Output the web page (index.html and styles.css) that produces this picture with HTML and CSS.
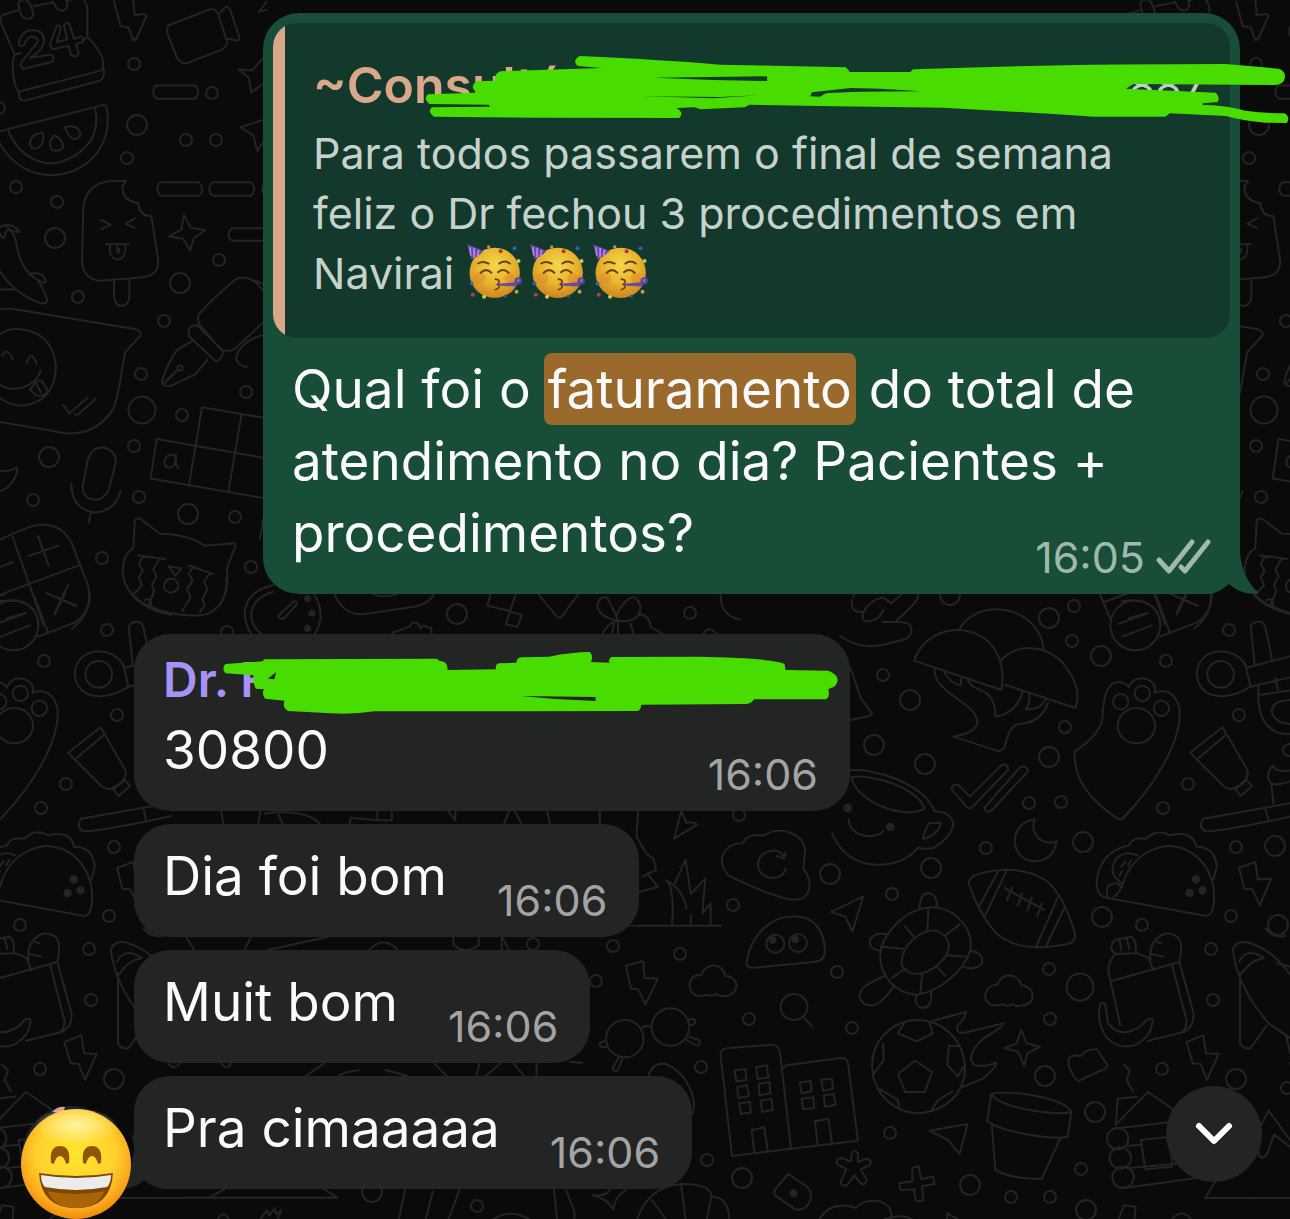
FILE: index.html
```html
<!DOCTYPE html>
<html lang="pt-BR">
<head>
  <meta charset="UTF-8" />
  <meta name="viewport" content="width=device-width, initial-scale=1.0" />
  <title>Conversa</title>
  <link rel="stylesheet" href="styles.css">
</head>
<body>
  <main class="chat">

    <!-- wallpaper, repeats every 1122px -->
    <svg class="wallpaper" width="1290" height="1219" viewBox="0 0 1290 1219" aria-hidden="true">
      <defs>
        <path id="dots-s" d="M134 64h0M212 93h0M186 140h0M216 140h0M127 158h0M16 187h0M57 202h0M219 260h0M78 297h0M164 321h0M141 374h0M246 392h0M182 415h0M134 446h0M33 500h0M139 497h0M235 517h0M102 558h0M251 567h0M-1 108h0M1074 606h0M1072 641h0M883 675h0M1166 661h0M1229 630h0M1065 727h0M1239 715h0M1188 784h0M1163 808h0M1029 803h0M1061 802h0M986 848h0M1236 847h0M892 894h0M1231 916h0M1289 750h0M739 815h0M733 905h0M613 946h0M680 954h0M596 981h0M837 972h0M749 1019h0M852 1028h0M701 1067h0M1049 969h0M1050 1019h0M1142 925h0M1211 949h0M1213 1000h0M1162 1069h0M890 1133h0M707 1160h0M1011 1197h0M1050 1197h0M1081 1169h0M1287 1088h0M690 613h0M227 632h0M533 944h0M477 1206h0"/>
        <path id="dots-m" d="M137 125h0M55 238h0M180 283h0M49 457h0M188 514h0M1049 618h0M1101 656h0M910 700h0M874 745h0M925 764h0M1049 757h0M1083 842h0M931 868h0M1275 846h0M1102 917h0M1278 925h0M950 595h0M830 874h0M1045 1076h0M1095 1112h0M1236 1079h0M742 1178h0M970 1185h0M1086 1210h0M457 614h0M372 1192h0"/>
        <path id="dots-l" d="M142 410h0M1080 987h0"/>

        <g id="doodles">
          <use href="#dots-s" class="dot dot-s"/><use href="#dots-s" class="dot dot-s-in"/>
          <use href="#dots-m" class="dot dot-m"/><use href="#dots-m" class="dot dot-m-in"/>
          <use href="#dots-l" class="dot dot-l"/><use href="#dots-l" class="dot dot-l-in"/>

          <!-- top left: calendar, bolt, camera, melon, ice cream, pen, mic, cat -->
          <svg x="0" y="0" width="270" height="620" viewBox="0 0 810 1568" preserveAspectRatio="none" overflow="visible">
            <path d="M54 26L8 38Q-2 44 4 60L44 138Q34 160 40 190Q44 220 56 232L305 178Q314 166 306 144Q286 110 262 94L262 20Q258 0 240 -8L202 2M100 16L158 6M44 138L62 134M250 102L262 94M56 232L58 246Q62 254 76 254L300 204Q314 198 312 176"/>
            <path d="M54 10Q56 0 72 -2Q86 0 92 14L100 34Q98 48 82 48Q68 46 62 34ZM158 4L166 16Q176 30 192 26Q206 20 200 6L194 -12"/>
            <path d="M56 110Q64 76 100 76Q134 78 132 106Q126 130 90 146L154 138Q166 148 156 156L72 174Q60 172 64 158Q100 120 114 106Q112 92 94 92Q78 98 72 114Q60 122 56 110ZM170 66Q180 60 182 74L170 106 202 100 192 66Q196 56 208 60L222 98 244 92Q254 96 248 106L228 112 236 134Q234 144 222 142L212 138 206 116 160 124Q148 118 152 106Z"/>
            <path d="M342 4L362 66 386 70 400 102Q408 102 412 92L440 40Q436 34 426 36L404 38 400 0"/>
            <path d="M506 64L628 24Q644 20 654 34L682 108Q680 120 664 126L560 160Q540 160 530 144L502 84Q500 70 506 64ZM656 36L676 18Q686 16 692 28L718 94Q718 104 706 102L682 98"/>
            <path d="M470 216H584Q596 224 594 238Q590 250 580 250H472Q460 244 460 234Q460 220 470 216ZM482 461H596Q608 469 606 483Q602 495 592 495H484Q472 489 472 479Q472 465 482 461ZM638 461H752Q764 469 762 483Q758 495 748 495H640Q628 489 628 479Q628 465 638 461ZM800 577H698Q686 583 686 593Q686 605 698 609H800M808 461Q786 465 786 479Q788 491 808 495"/>
            <path d="M-10 334L316 264Q326 280 322 320C306 430 160 470 70 424Q26 404 -6 356M24 328C50 390 130 436 210 400Q304 360 286 276"/>
            <path d="M90 360Q94 338 128 336Q134 350 124 366Q110 380 96 374Q88 368 90 360ZM162 342Q186 350 190 372Q182 384 158 380Q148 374 150 358ZM194 322Q230 312 242 336Q238 352 222 352Q208 350 194 322Z"/>
            <path d="M378 458H330Q254 466 250 530L246 660Q248 706 300 710L420 702Q480 698 474 656L454 546Q420 548 414 514Q364 506 368 470ZM342 710V750Q346 774 366 774Q388 770 388 750V708M302 556L332 568 304 580M404 552L376 566 404 576M318 618H388M330 622V640Q340 658 356 656Q378 652 376 622M352 624V638Q358 642 358 630"/>
            <path d="M552 544L572 576 616 582 582 602 570 634 550 604 508 598 544 580ZM716 176L756 178 790 146M716 176L746 196 754 234 800 205M722 322L800 300M722 322L760 342 772 382 800 345M800 5L776 30 800 25"/>
            <path d="M0 574Q34 560 58 586Q40 590 16 570M0 590Q10 610 14 596Q18 580 26 582Q44 586 50 620Q60 680 114 710Q136 736 142 762Q136 770 118 766Q40 740 0 686M88 694Q130 684 138 712Q130 718 112 708M-10 732H48"/>
            <path d="M-30 790Q10 776 44 782L404 832Q424 836 422 848L376 890C360 960 356 1000 340 1034Q290 1100 200 1096L-10 1066M-20 860Q10 830 56 832Q160 840 168 928Q164 1020 60 1026Q10 1022 -20 990M6 900Q20 876 38 908M80 918Q94 882 110 920M-10 966C30 1000 110 980 122 936M90 986Q110 958 124 962L144 988Q130 1006 110 1000ZM110 972L122 992M190 1024L208 1046 262 1006M224 1048H234L286 1010"/>
            <path d="M596 796Q630 760 708 706Q730 696 760 710Q790 730 810 760M596 796Q590 808 600 822L660 882Q680 892 702 884L810 800M764 710L800 720M566 834Q570 824 590 822L668 886Q670 908 648 914L566 850ZM576 862L530 886Q490 940 486 968Q490 978 512 976L586 946 622 910M492 970L534 934M800 845Q720 860 708 906Q714 926 740 928"/>
            <ellipse cx="540" cy="931" rx="8" ry="6"/>
            <path d="M606 1030L830 1062M470 1110L830 1164M452 1210L820 1264M606 1030L568 1222M724 1050L686 1240M470 1110L452 1210M526 1156Q520 1146 506 1152Q490 1160 494 1174Q500 1186 516 1182Q530 1170 528 1150Q524 1180 536 1184"/>
            <path d="M264 1160Q280 1128 310 1132Q346 1138 348 1168L326 1240Q310 1266 280 1264Q246 1258 248 1230ZM214 1222Q214 1286 280 1296Q344 1296 362 1242M272 1298L266 1322M0 1190Q30 1194 50 1182Q56 1200 30 1226Q20 1236 0 1242"/>
            <path d="M0 1364L90 1332Q180 1312 216 1376L264 1480Q280 1550 216 1590M38 1358L130 1580M0 1504L236 1430M86 1406L174 1380M114 1356L146 1430M140 1500L226 1532M204 1480L164 1550M0 1434L38 1422M0 1520Q110 1510 116 1580M20 1564L76 1550"/>
            <path d="M400 1386L404 1316Q414 1304 430 1318L480 1350Q560 1350 614 1380L704 1374Q710 1380 700 1394L680 1440C690 1500 660 1552 600 1556C500 1560 380 1530 368 1450Q368 1400 400 1386ZM414 1404L496 1414M430 1406L416 1426 428 1444 416 1460 426 1480 402 1502M478 1414L460 1440 470 1458 456 1478 462 1496 446 1530M566 1430L640 1452M582 1432L566 1450 578 1470 560 1490 572 1510 546 1546M630 1450L612 1470 622 1490 606 1516 614 1530 600 1548M506 1432L544 1438 526 1456ZM492 1480Q500 1460 520 1464Q540 1474 534 1488Q520 1504 500 1496Q490 1490 492 1480ZM780 1362L790 1310"/>
          </svg>

          <!-- strip between the two senders: stopwatch, kite, hearts -->
          <svg x="220" y="585" width="520" height="60" viewBox="0 0 1560 180" overflow="visible">
            <path d="M160 0Q74 20 74 90Q78 130 104 160M160 20Q90 40 94 100Q100 130 124 146M270 10Q304 50 302 100Q296 130 284 146M220 50Q232 46 230 58L194 98Q180 106 174 94ZM344 28Q370 90 430 88L590 64Q628 54 642 28M460 28Q490 40 530 28M516 144L570 124Q576 106 594 116L602 130Q608 116 620 126L634 128V146M812 26L802 62 870 78 888 26M870 78L858 118 892 126 906 90 872 80M956 28L1010 94Q1018 102 1026 94L1074 28M1188 92Q1220 30 1246 38Q1270 60 1256 90Q1230 116 1190 106Q1136 96 1132 62Q1134 36 1160 36Q1180 70 1196 110M1256 86Q1290 90 1292 126L1326 146M1188 106Q1160 120 1148 146M1184 108L1176 146M1194 108V146M1232 116L1240 146M1502 28Q1500 90 1560 104M1450 146Q1466 120 1488 146M0 60Q24 20 18 -20"/>
            <path class="solid" d="M262 32a8 8 0 1 0 1 0M275 77a8 8 0 1 0 1 0M262 122a8 8 0 1 0 1 0"/>
          </svg>

          <!-- right middle: mushrooms, paw, cup, ticks, moon, toothpaste -->
          <svg x="840" y="590" width="450" height="330" viewBox="0 0 1350 990" overflow="visible">
            <path d="M0 138Q60 180 130 164L200 146Q220 130 212 108Q204 94 160 96L128 96M168 94L220 44Q236 26 236 0M36 30Q30 70 70 66M40 20L50 0M70 70Q60 100 96 92Q120 84 130 60M70 66Q90 30 130 22L154 40 200 0"/>
            <path d="M222 212C260 110 380 96 444 154Q500 210 484 300ZM358 118C400 36 560 30 606 150L610 176M484 210C540 150 640 170 684 240Q726 300 706 354L494 284M284 238Q280 270 320 302C380 350 410 360 412 400Q404 430 340 440L470 482Q486 486 494 470Q510 400 540 402Q606 396 624 338M314 248Q330 280 362 286L364 264M384 272Q390 290 430 304Q466 320 466 380Q530 370 548 306M568 312Q570 340 558 358Q600 360 616 330M30 230L62 324 96 370Q96 378 80 380L30 390"/>
            <path d="M704 484Q790 430 788 370Q794 270 840 276Q860 280 866 292Q880 260 916 266Q950 276 944 308Q1000 290 1018 352C1030 460 930 600 850 684Q840 692 830 684C750 630 700 570 704 484Z"/>
            <circle cx="842" cy="335" r="23"/><circle cx="907" cy="310" r="23"/><circle cx="964" cy="355" r="23"/><ellipse cx="889" cy="407" rx="56" ry="53"/>
            <path d="M20 542C100 530 250 580 284 664Q330 664 340 700Q336 740 280 774Q250 780 234 772C190 830 90 840 30 800Q0 780 -24 730M34 562C90 550 230 590 254 656C200 690 50 640 34 562ZM266 700L302 698Q300 730 250 748Q246 740 266 700ZM26 688C30 740 100 752 130 724"/>
            <circle class="solid" cx="23" cy="654" r="10"/><circle class="solid" cx="151" cy="711" r="10"/>
            <path d="M334 598Q340 578 356 586L390 620 486 524Q506 522 504 540L396 652Q388 658 380 650ZM434 652L540 532Q560 524 564 544L456 660Q438 674 434 652ZM584 688C500 700 510 814 584 814Q640 812 650 754Q630 764 606 752Q570 730 584 688Z"/>
            <path d="M780 12L812 90M792 36L860 12M946 12L990 128M1116 12Q1114 70 1070 98L960 140M1010 74L1040 12M1020 24L1074 46M834 102L922 70M848 140L936 106"/>
            <circle cx="886" cy="106" r="75"/>
            <path d="M1220 234C1190 160 1070 170 1070 254C1080 330 1160 334 1232 290L1218 234L1360 196M1232 290L1360 260M1244 224L1232 110Q1240 92 1264 96Q1276 104 1278 120L1296 208M1256 282Q1250 350 1270 390Q1300 440 1360 430M1262 314L1360 300M1306 264L1314 300M1360 330Q1290 330 1296 370Q1310 404 1360 402M1050 488L1148 412 1222 540Q1228 556 1210 580L1174 598Q1160 596 1150 588ZM1076 504L1158 434M1186 598L1218 568 1236 588 1202 618ZM1090 686L1360 638M1090 686Q1074 706 1092 722Q1110 732 1360 678M1276 656L1284 688M1300 640L1294 580Q1272 560 1298 526Q1306 550 1360 540M1296 580Q1310 590 1360 570M1240 12Q1280 60 1360 74M1280 30Q1300 20 1300 50"/>
            <circle cx="1142" cy="253" r="40"/>
          </svg>

          <!-- bottom right: cloud, turtle, football, taco, buildings, ball, pot, cabin -->
          <svg x="590" y="800" width="700" height="419" viewBox="0 0 1568 1257" preserveAspectRatio="none" overflow="visible">
            <path d="M22 30V60M108 30L104 110 128 164 142 176 148 210 118 230M128 220L152 260 110 276M170 240Q190 260 184 376M170 240Q210 270 216 326M190 250L214 180 226 282 258 236 252 340 270 310V376M226 346V376M90 377H294M204 36L188 116 240 74Q234 64 216 68L206 36"/>
            <path d="M310 226C280 180 300 130 342 130Q350 100 390 106C420 80 476 92 482 150L478 206C500 240 500 310 446 298Q390 280 310 226ZM438 206C430 250 376 240 376 192C380 144 430 140 434 174M418 168L434 176 438 158"/>
            <path d="M350 490C360 400 410 340 470 350C520 360 530 430 524 470Q516 486 500 486L362 504Q350 500 350 490Z"/>
            <ellipse cx="415" cy="431" rx="20" ry="27"/><ellipse cx="466" cy="429" rx="20" ry="27"/>
            <ellipse class="solid" cx="409" cy="420" rx="6" ry="9"/><ellipse class="solid" cx="460" cy="418" rx="6" ry="9"/>
            <path d="M540 336L612 290 588 394 572 350ZM80 498L116 484Q122 484 120 496L122 534 152 536 124 614 108 568 92 566ZM1454 204L1490 186 1496 238 1526 236 1500 316 1484 268 1466 266ZM1336 726L1374 706 1380 760 1408 762 1382 840 1368 792 1350 790ZM234 584C216 570 220 522 250 524C260 484 300 490 302 528C340 530 334 590 300 588Q290 590 284 582Q270 592 262 584Q244 592 234 584ZM898 614C876 600 884 554 912 554C924 514 960 520 966 556C1000 560 1000 616 966 616Q954 622 948 612Q934 622 926 612Q908 620 898 614Z"/>
            <path d="M650 470C650 410 700 330 760 322C820 320 860 390 852 450C840 510 780 580 730 584C680 580 650 520 650 470ZM698 490C696 440 740 386 776 392C810 410 810 450 790 480C770 510 740 530 716 518Q700 510 698 490ZM758 326L756 388M706 378L726 412M828 374L796 406M652 440L702 446M846 470L800 466M676 534L708 504M740 582L744 520M796 528L776 500M738 324Q740 278 758 280Q780 284 776 322M668 404Q630 392 626 430Q630 450 650 452M852 454Q882 456 878 490Q866 512 838 502M660 528Q600 560 604 590Q610 622 640 614Q660 600 682 556M734 584Q720 616 746 624Q768 620 764 576M848 250Q850 230 870 222Q960 190 1020 240Q1060 280 1086 400Q1090 430 1060 434Q960 460 910 400Q870 340 848 250ZM914 214L872 318M934 210L884 350M1048 292L1000 438M1064 320L1022 438M928 264L1018 330M946 262L934 300M968 280L958 316M990 292L980 330M1012 310L1002 348"/>
            <path d="M1160 294C1130 290 1130 240 1144 200Q1160 150 1208 136Q1214 110 1246 116Q1270 84 1300 106Q1350 90 1358 140Q1400 140 1404 200L1396 240M1160 294L1380 348Q1396 346 1398 300C1400 200 1350 136 1290 138C1230 150 1200 210 1192 260M1160 294Q1150 250 1180 250Q1200 260 1174 290M1192 250Q1156 220 1180 174Q1200 150 1226 166M1200 184L1190 200M1212 180L1206 196M1192 214L1186 226"/>
            <ellipse class="solid" cx="1357" cy="238" rx="7" ry="10"/><ellipse class="solid" cx="1343" cy="279" rx="7" ry="10"/><ellipse class="solid" cx="1372" cy="271" rx="7" ry="10"/>
            <ellipse cx="78" cy="716" rx="42" ry="56"/><ellipse cx="180" cy="681" rx="42" ry="56"/>
            <path d="M114 686Q124 672 138 682M66 768L50 806Q56 822 64 806L74 772M36 724Q20 724 22 738Q30 746 40 740M220 660Q234 652 236 664Q234 676 222 676M214 718L240 738Q250 730 244 720L222 710M478 652L498 680M132 826Q140 786 170 792C220 820 240 900 230 940"/>
            <ellipse cx="457" cy="621" rx="30" ry="39"/>
            <path d="M292 760Q296 744 310 744L410 734Q424 740 426 760L450 1042M318 1068L292 760M318 1068L600 1022L578 790Q576 772 560 774L440 796 430 806M324 812L348 806 350 840 328 844ZM372 802L396 796 400 832 376 838ZM330 862L352 856 356 888 332 894ZM378 852L402 846 404 880 380 886ZM334 910L358 906 360 938 338 942ZM382 902L406 896 410 930 386 936ZM470 848L494 842 496 874 474 880ZM518 840L542 836 544 866 522 872ZM474 896L500 892 502 924 478 928ZM524 886L546 882 550 914 526 920ZM368 1056L362 990 390 982 398 1050M510 1034L504 964 534 956 542 1028"/>
            <path d="M734 660C680 660 630 720 632 800C634 880 680 940 740 940C800 930 840 880 840 800C836 720 790 660 734 660ZM704 668L690 700 732 724 768 700 760 666M728 782L766 816 750 876 706 876 690 822ZM656 730L658 780 636 820M804 738H826M804 738L800 794 824 830 836 800M650 868L690 900 692 926M766 928L778 902 812 874M768 662L842 636Q844 646 824 676Q816 702 840 698L926 670Q928 678 880 716Q840 770 860 794Q880 804 910 788Q912 800 880 836L836 860"/>
            <path d="M966 690L978 730 1008 740 980 760 972 798 960 756 928 744 956 730ZM1072 776Q1080 762 1100 768Q1110 746 1136 748L1158 794Q1160 808 1140 814L1096 842Q1086 844 1072 796ZM1196 794L1210 812 1202 840 1216 874"/>
            <path d="M900 882C940 870 1060 890 1078 936C1040 950 910 920 900 882ZM898 886L890 964C930 1000 1040 1020 1070 1010L1078 936M900 974L908 1110Q950 1140 1012 1136L1054 1014M760 992L846 972 828 1062 802 1020ZM584 1084L586 1060Q594 1046 600 1060L600 1086 620 1076Q634 1080 626 1096L606 1108 620 1140Q616 1158 606 1150L592 1126 576 1156Q562 1160 562 1144L574 1108 554 1092Q550 1074 562 1074ZM722 1104L736 1098 742 1138 768 1130 772 1152 744 1158 746 1202 730 1202 726 1168 696 1170 692 1150 722 1144ZM444 1122L486 1160Q500 1180 492 1206Q480 1234 460 1228L414 1186Q410 1174 420 1160Z"/>
            <ellipse class="solid" cx="456" cy="1180" rx="6" ry="9"/>
            <path d="M1168 448Q1166 418 1190 416L1212 410Q1226 420 1222 460L1176 462ZM1186 418L1190 450M1202 414L1208 446M1176 464Q1158 490 1162 520L1188 676M1222 458L1250 472 1262 510M1170 542L1320 486Q1330 430 1316 410C1280 380 1250 430 1256 480M1280 430L1270 426M1284 470L1258 462M1320 486L1352 640Q1354 680 1330 696L1250 722M1304 496L1336 660Q1338 690 1320 700M1144 610Q1132 660 1156 710Q1180 750 1220 736Q1260 710 1260 658Q1250 650 1236 676Q1190 720 1160 670L1154 610Z"/>
            <path d="M1440 450Q1444 424 1470 426C1540 450 1580 540 1600 600M1440 450Q1450 560 1520 670L1570 716M1456 520V730Q1464 750 1480 744L1516 676M1454 484Q1470 440 1510 474Q1480 480 1460 520M1540 490L1570 500M1560 710L1568 760"/>
            <path d="M1178 974L1250 876 1330 950M1186 984L1300 966M1178 974L1182 896 1226 890M1202 1038L1236 1034M1206 1104L1360 1086M1196 1164L1360 1134M1234 1020L1300 1010 1304 1100 1244 1108ZM1400 1146L1378 1194H1600M1520 932L1568 1020M1520 932L1490 1010 1500 1070Q1512 1080 1520 1050L1532 1004 1568 1040"/>
            <ellipse cx="1182" cy="1016" rx="24" ry="32"/><ellipse cx="1188" cy="1074" rx="24" ry="32"/><ellipse cx="1194" cy="1132" rx="24" ry="32"/>
            <path d="M6 1186Q40 1190 44 1168M6 1186Q40 1196 52 1228Q56 1190 80 1170M106 1257Q130 1160 204 1152Q270 1150 272 1190Q310 1190 312 1257M138 1200L170 1257M204 1154L214 1257M272 1190L262 1257M514 1257Q540 1200 596 1224Q610 1196 650 1204Q680 1220 674 1257M660 1257Q700 1240 720 1257M800 1257V1240L824 1257M1184 1257L1196 1216 1222 1220 1220 1257M1304 1257Q1326 1224 1346 1257"/>
          </svg>

          <!-- gaps between the received bubbles -->
          <svg x="130" y="795" width="620" height="424" viewBox="0 0 1568 1272" preserveAspectRatio="none" overflow="visible">
            <path d="M230 45L236 86M330 45L324 86M376 60L386 86M340 56Q440 40 480 86M556 86L558 68 626 76V45M626 76H662V45M802 45L822 76 824 45M960 45L946 86M972 45L990 86M1054 45L1062 86M1188 45V86M34 400Q50 430 84 422M142 426L162 464M306 426L290 464M350 464L500 426M606 464Q640 420 676 464M818 426V450Q850 480 882 450V426M940 426V464M942 426L958 464M446 842L490 806M530 840Q550 830 578 826M646 824L700 842M770 806L800 842M884 806L876 842M900 842L936 806M970 806L996 842M1028 806V842M1112 800L1144 804M96 804Q110 830 126 804M230 804Q244 830 256 804M0 1208H524L490 1182M200 1208L240 1182M696 1182L680 1272M766 1190L748 1272M834 1182L806 1272M1072 1182L1080 1272M1102 1182L1124 1250V1272M920 1272Q960 1240 1010 1272M330 1272L346 1246 352 1262 366 1240 370 1258 382 1246 374 1272M222 1272Q236 1244 250 1272"/>
          </svg>
        </g>
      </defs>
      <use href="#doodles"/>
      <use href="#doodles" x="1122"/>
      <use href="#doodles" x="-1122"/>
    </svg>

    <svg width="0" height="0" class="sprite" aria-hidden="true">
      <defs>
        <radialGradient id="skin" cx=".5" cy=".35" r=".65">
          <stop offset="0" stop-color="#f4d84a"/>
          <stop offset=".55" stop-color="#e8b62e"/>
          <stop offset="1" stop-color="#cf851f"/>
        </radialGradient>
        <symbol id="party" viewBox="52 22 189 169">
          <circle cx="138" cy="112" r="76" fill="url(#skin)"/>
          <circle cx="92" cy="128" r="18" fill="#e0882a" opacity=".5"/>
          <circle cx="184" cy="128" r="16" fill="#e0882a" opacity=".5"/>
          <path d="M55 26L104 46Q90 62 68 72Z" fill="#6d45b4"/>
          <path d="M63 34L66 60M76 36L76 66M90 42L86 62" stroke="#b98ae0" stroke-width="5" fill="none"/>
          <path d="M88 84Q102 74 120 84M152 84Q168 72 184 84M96 112Q112 96 128 112M148 110Q164 96 180 112" stroke="#6b4218" stroke-width="6" fill="none" stroke-linecap="round"/>
          <path d="M140 131Q160 134 146 147Q160 156 140 163" stroke="#6b3d14" stroke-width="5" fill="none" stroke-linecap="round"/>
          <path d="M150 145L204 140V153L150 151Z" fill="#6a4a9e"/>
          <circle cx="209" cy="136" r="11" fill="#5a4596"/>
          <circle cx="209" cy="135" r="4" fill="#8d79c4"/>
          <circle cx="156" cy="47" r="6" fill="#b8322f"/>
          <circle cx="120" cy="34" r="5" fill="#c98a5a"/>
          <circle cx="198" cy="38" r="6" fill="#2f62b0"/>
          <circle cx="210" cy="76" r="6" fill="#c9c944"/>
          <circle cx="68" cy="144" r="6" fill="#2f62b0"/>
          <circle cx="72" cy="178" r="6" fill="#a8405a"/>
          <circle cx="106" cy="184" r="6" fill="#c9d444"/>
          <circle cx="170" cy="183" r="5" fill="#2f5a8a"/>
          <circle cx="204" cy="169" r="6" fill="#c99a4a"/>
        </symbol>
      </defs>
    </svg>

    <article class="bubble bubble-out">
      <blockquote class="quote">
        <div class="quote-head">
          <span class="quote-name">~Consultór</span>
          <span class="quote-phone">887</span>
        </div>
        <p class="quote-text">Para todos passarem o final de semana feliz o Dr fechou 3 procedimentos em Navirai <svg class="emoji" role="img" aria-label="🥳"><use href="#party"/></svg><svg class="emoji" role="img" aria-label="🥳"><use href="#party"/></svg><svg class="emoji" role="img" aria-label="🥳"><use href="#party"/></svg></p>
      </blockquote>
      <p class="text">Qual foi o <mark>faturamento</mark> do total de atendimento no dia? Pacientes + procedimentos?
        <span class="meta">
          <time>16:05</time>
          <svg class="ticks" width="54" height="36" viewBox="0 0 54 36" role="img" aria-label="Entregue"><path d="M3 21L13 32L36 3M25 28L29 32L52 3"/></svg>
        </span>
      </p>
      <svg class="tail-out" width="50" height="50" viewBox="0 0 50 50" aria-hidden="true"><path d="M0 0H30V10Q33 36 49 49Q32 52 19 40Q10 48 0 50Z"/></svg>
      <svg class="scribble-out" width="1030" height="350" viewBox="0 0 1568 1050" preserveAspectRatio="none" aria-hidden="true"><path d="M487 168Q620 180 700 194L892 202 898 216 990 216 994 208Q1200 192 1470 192L1550 206Q1562 212 1560 235Q1558 255 1545 255L1330 252 1318 266 1455 278Q1462 290 1458 306L1435 310V315Q1470 315 1500 332Q1530 340 1560 340Q1569 352 1563 369L1530 368Q1495 362 1470 348L1385 340 1378 350H1270Q1150 335 1040 323L850 318 745 314 738 322 670 328 662 322 634 324Q647 340 638 354L420 353 265 350Q254 335 262 322L350 320 348 314 258 312Q248 295 256 283L330 278Q318 260 330 244L358 242Q356 222 366 214L520 204 484 198Q474 182 487 168ZM600 233L772 229V243L690 240ZM840 277L900 264 945 266 1006 274Q900 274 862 280L852 290 838 289ZM580 289L700 291 760 286 690 295 640 292Z"/></svg>
    </article>

    <article class="bubble bubble-in bubble-named">
      <div class="sender"><span>Dr. F</span><span>m</span></div>
      <div class="line">
        <p class="text">30800</p>
        <time>16:06</time>
      </div>
      <svg class="scribble-in" width="730" height="190" viewBox="0 0 1568 570" preserveAspectRatio="none" aria-hidden="true"><path d="M205 102L285 94 288 88 660 86 664 92Q684 94 682 120L786 118Q784 104 792 100L830 98Q830 84 840 82L900 80Q950 66 988 66Q996 80 990 96L1030 98Q1026 88 1034 81L1220 80Q1380 84 1406 102L1408 120 1500 122Q1520 132 1520 152Q1518 170 1505 174L1500 178Q1504 200 1495 208H1340Q1338 218 1325 222L1098 224Q1098 240 1090 243L525 244Q480 254 430 250L340 243Q326 232 332 212L290 206Q282 190 288 178L270 176Q264 160 265 136L205 130Q196 115 205 102ZM296 146L314 126 310 148ZM840 198L1000 201V213Q920 210 840 198Z"/></svg>
    </article>

    <article class="bubble bubble-in">
      <div class="line">
        <p class="text">Dia foi bom</p>
        <time>16:06</time>
      </div>
    </article>

    <article class="bubble bubble-in">
      <div class="line">
        <p class="text">Muit bom</p>
        <time>16:06</time>
      </div>
    </article>

    <div class="row">
      <svg class="avatar" width="110" height="114" viewBox="0 0 110 114" role="img" aria-label="😄">
        <defs>
          <radialGradient id="face" cx=".5" cy=".4" r=".6">
            <stop offset="0" stop-color="#ffe52e"/>
            <stop offset=".6" stop-color="#ffd02c"/>
            <stop offset=".85" stop-color="#fba81c"/>
            <stop offset="1" stop-color="#ef8a0c"/>
          </radialGradient>
          <radialGradient id="shine" cx=".5" cy=".4" r=".5">
            <stop offset="0" stop-color="#fff8b0" stop-opacity=".9"/>
            <stop offset="1" stop-color="#fff8b0" stop-opacity="0"/>
          </radialGradient>
        </defs>
        <circle cx="50" cy="50" r="49" fill="#1d2430"/>
        <path d="M31 7Q37 1 44 2L42 8Z" fill="#d9a3a0"/>
        <circle cx="55" cy="59" r="55" fill="url(#face)"/>
        <ellipse cx="55" cy="24" rx="42" ry="20" fill="url(#shine)"/>
        <path d="M30 58Q28 41 39 41Q50 41 48 58L45 59Q43 51 39 51Q35 51 33 59ZM62 58Q60 41 71 41Q82 41 80 58L77 59Q75 51 71 51Q67 51 65 59Z" fill="#8f5605"/>
        <path d="M18 68Q55 74 92 68Q90 103 55 103Q20 103 18 68Z" fill="#7c4704"/>
        <path d="M26 86Q55 92 84 86Q76 103 55 103Q34 103 26 86Z" fill="#a86405"/>
        <path d="M20 70Q55 76 90 70Q90 78 86 82Q55 88 24 82Q20 78 20 70Z" fill="#ececec"/>
      </svg>
      <article class="bubble bubble-in bubble-last">
        <div class="line">
          <p class="text">Pra cimaaaaa</p>
          <time>16:06</time>
        </div>
        <svg class="tail-in" width="50" height="50" viewBox="0 0 50 50" aria-hidden="true"><path d="M50 0H19V10Q17 36 1 49Q18 52 29 41Q38 49 50 50Z"/></svg>
      </article>
    </div>

    <button class="to-bottom" type="button" aria-label="Ir para o fim">
      <svg width="40" height="26" viewBox="0 0 40 26" aria-hidden="true"><path d="M5 5L20 20L35 5"/></svg>
    </button>
  </main>
</body>
</html>
```
FILE: styles.css
```css
* {
  box-sizing: border-box;
}
body {
  margin: 0;
  background: #0a0a0a;
  color: #fafafa;
  font-family: 'Inter', sans-serif;
}
p, blockquote {
  margin: 0;
}
.chat {
  position: relative;
  display: flex;
  flex-direction: column;
  align-items: flex-start;
  gap: 13px;
  min-height: 100vh;
  padding-top: 13px;
  overflow: hidden;
}

/* wallpaper */
.wallpaper {
  position: absolute;
  top: 0;
  left: 0;
  fill: none;
  stroke: #242424;
  stroke-width: 2px;
  stroke-linecap: round;
  stroke-linejoin: round;
}
.wallpaper path,
.wallpaper ellipse,
.wallpaper circle {
  vector-effect: non-scaling-stroke;
}
.wallpaper .solid {
  fill: #242424;
}
.dot-s { stroke-width: 14px; }
.dot-s-in { stroke-width: 10px; stroke: #0a0a0a; }
.dot-m { stroke-width: 22px; }
.dot-m-in { stroke-width: 18px; stroke: #0a0a0a; }
.dot-l { stroke-width: 29px; }
.dot-l-in { stroke-width: 25px; stroke: #0a0a0a; }
.sprite {
  position: absolute;
}

/* bubbles */
.bubble {
  position: relative;
  border-radius: 36px;
}
.bubble-out {
  align-self: stretch;
  margin: 0 50px 27px 263px;
  padding: 10px 10px 13px;
  border-bottom-right-radius: 0;
  background: linear-gradient(#184d37, #184d37) no-repeat 0 0 / 100% calc(100% - 50px), linear-gradient(#184d37, #184d37) no-repeat 0 100% / calc(100% - 30px) 50px;
}
.bubble-in {
  margin-left: 134px;
  padding: 16px 32px 25px 29px;
  background: #232524;
}
.text {
  font-size: 53px;
  line-height: 72px;
}
.bubble-out .text {
  padding: 15px 20px 0 19px;
}
time {
  font-size: 43px;
  line-height: 48px;
  color: #a3a4a4;
}
mark {
  margin: 0 -2px;
  padding: 4px;
  border-radius: 8px;
  background: #996a2b;
  color: inherit;
}

/* quoted message */
.quote {
  padding: 32px 24px 35px 40px;
  border-radius: 24px;
  background: linear-gradient(90deg, #dba78a 12px, #12392b 12px);
}
.quote-head {
  display: flex;
  justify-content: space-between;
  margin-bottom: 8px;
  line-height: 60px;
}
.quote-name {
  font-size: 50px;
  font-weight: 600;
  color: #dba78a;
}
.quote-phone {
  font-size: 43px;
  color: #c4cfca;
}
.quote-text {
  font-size: 43px;
  line-height: 60px;
  color: #c8d2cd;
}
.emoji {
  width: 63px;
  height: 56px;
  vertical-align: -10px;
}

.meta {
  float: right;
  display: flex;
  align-items: center;
  gap: 11px;
  margin-top: 36px;
}
.meta time {
  color: #a0b9ac;
}
.ticks {
  overflow: visible;
  fill: none;
  stroke: #a0b9ac;
  stroke-width: 5px;
  stroke-linecap: round;
  stroke-linejoin: round;
}
.line {
  display: flex;
  align-items: flex-end;
  justify-content: space-between;
  gap: 50px;
}
.line time {
  margin-bottom: -12px;
}
.bubble-named {
  width: 716px;
  max-width: 80%;
}
.sender {
  display: flex;
  justify-content: space-between;
  margin-bottom: 4px;
  font-size: 48px;
  font-weight: 600;
  line-height: 60px;
  color: #a792f8;
}

/* last message with avatar */
.row {
  display: flex;
  align-items: flex-start;
  gap: 3px;
  margin-left: 21px;
}
.row .bubble {
  margin-left: 0;
}
.avatar {
  z-index: 1;
  margin-top: 29px;
}
.bubble-last {
  border-bottom-left-radius: 0;
  background: linear-gradient(#232524, #232524) no-repeat 0 0 / 100% calc(100% - 50px), linear-gradient(#232524, #232524) no-repeat 100% 100% / calc(100% - 31px) 50px;
}

/* tails and marker strokes lie over the bubbles */
.tail-out {
  position: absolute;
  right: -20px;
  bottom: 0;
  fill: #184d37;
}
.tail-in {
  position: absolute;
  left: -19px;
  bottom: 0;
  fill: #232524;
}
.scribble-out {
  position: absolute;
  left: -3px;
  top: -13px;
  fill: #48dc00;
  fill-rule: evenodd;
}
.scribble-in {
  position: absolute;
  left: -4px;
  top: -4px;
  fill: #48dc00;
  fill-rule: evenodd;
}

/* scroll to bottom */
.to-bottom {
  position: absolute;
  right: 28px;
  bottom: 37px;
  display: flex;
  align-items: center;
  justify-content: center;
  width: 96px;
  height: 96px;
  padding: 0;
  border: 0;
  border-radius: 50%;
  background: #232524;
  cursor: pointer;
}
.to-bottom svg {
  fill: none;
  stroke: #fff;
  stroke-width: 6px;
  stroke-linecap: round;
  stroke-linejoin: round;
}
```
